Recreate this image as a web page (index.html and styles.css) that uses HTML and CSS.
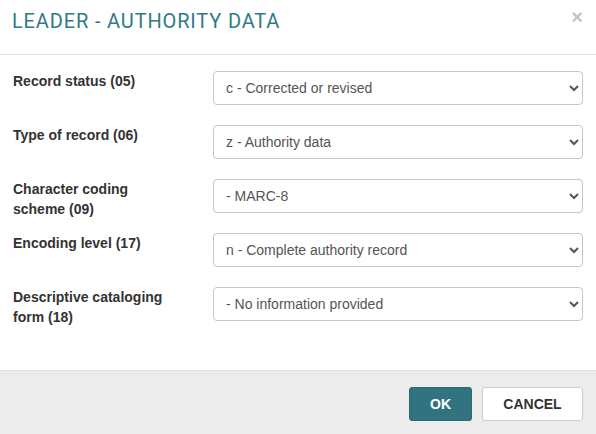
FILE: index.html
```html
<!DOCTYPE html>
<html lang="en">
<head>
  <meta charset="UTF-8">
  <title>Leader - Authority data</title>
  <link rel="stylesheet" href="styles.css">
</head>
<body>

  <div class="modal">
    <div class="modal-header">
      <h4 class="modal-title">LEADER - AUTHORITY DATA</h4>
      <button class="close" type="button">&times;</button>
    </div>

    <div class="modal-body">
      <div class="form-row">
        <label for="f05">Record status (05)</label>
        <select id="f05">
          <option>c - Corrected or revised</option>
        </select>
      </div>

      <div class="form-row">
        <label for="f06">Type of record (06)</label>
        <select id="f06">
          <option>z - Authority data</option>
        </select>
      </div>

      <div class="form-row">
        <label for="f09">Character coding scheme (09)</label>
        <select id="f09">
          <option>- MARC-8</option>
        </select>
      </div>

      <div class="form-row">
        <label for="f17">Encoding level (17)</label>
        <select id="f17">
          <option>n - Complete authority record</option>
        </select>
      </div>

      <div class="form-row">
        <label for="f18">Descriptive cataloging form (18)</label>
        <select id="f18">
          <option>- No information provided</option>
        </select>
      </div>
    </div>

    <div class="modal-footer">
      <button class="btn btn-primary">OK</button>
      <button class="btn btn-default">CANCEL</button>
    </div>
  </div>

</body>
</html>
```

FILE: styles.css
```css
body {
  margin: 0;
  font-family: "Liberation Sans", Arial, sans-serif;
  background: #fff;
  color: #333;
}

.modal {
  width: 596px;
  height: 434px;
  display: flex;
  flex-direction: column;
  background: #fff;
}

.modal-header {
  display: flex;
  justify-content: space-between;
  align-items: flex-start;
  height: 55px;
  box-sizing: border-box;
  padding: 9px 13px 0 12px;
  border-bottom: 1px solid #e5e5e5;
}

.modal-title {
  margin: 0;
  font-family: Roboto, sans-serif;
  font-weight: 400;
  font-size: 20px;
  line-height: 24px;
  color: #307a86;
  letter-spacing: 0.85px;
}

.close {
  border: none;
  background: none;
  padding: 0;
  margin-top: -2px;
  font-family: "Liberation Sans", Arial, sans-serif;
  font-size: 20px;
  font-weight: bold;
  line-height: 20px;
  color: #c4c4c4;
  cursor: pointer;
}

.modal-body {
  flex: 1;
  padding: 16px 13px 0 13px;
  display: flex;
  flex-direction: column;
  gap: 20px;
}

.form-row {
  display: flex;
  align-items: flex-start;
  height: 34px;
}

.form-row label {
  width: 162px;
  margin-right: 38px;
  font-size: 14px;
  font-weight: bold;
  line-height: 20px;
  color: #333;
}

.form-row select {
  width: 370px;
  height: 34px;
  padding: 0 8px;
  border: 1px solid #c8c5c2;
  border-radius: 4px;
  background: #fff;
  font-family: "Liberation Sans", Arial, sans-serif;
  font-size: 14px;
  color: #555;
}

.modal-footer {
  height: 64px;
  box-sizing: border-box;
  padding: 16px 13px 0 0;
  background: #ececec;
  border-top: 1px solid #e2e2e2;
  display: flex;
  justify-content: flex-end;
  align-items: flex-start;
  gap: 10px;
}

.btn {
  height: 34px;
  border-radius: 3px;
  font-family: "Liberation Sans", Arial, sans-serif;
  font-size: 14px;
  font-weight: bold;
  cursor: pointer;
}

.btn-primary {
  width: 63px;
  margin-left: 1px;
  background: #31737f;
  color: #fff;
  border: 1px solid #2c6872;
}

.btn-default {
  width: 101px;
  background: #fff;
  color: #333;
  border: 1px solid #ccc;
}
```
